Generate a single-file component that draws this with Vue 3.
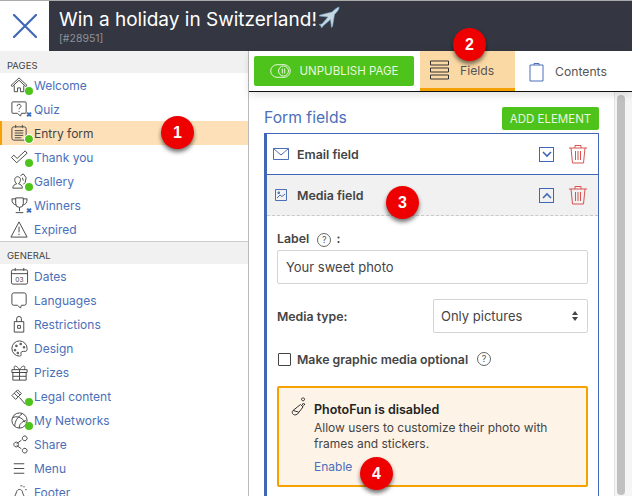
<script setup>
const pages = [
  { name: "Welcome", icon: "home", status: "on" },
  { name: "Quiz", icon: "quiz", status: "off" },
  { name: "Entry form", icon: "form", status: "on", active: true },
  { name: "Thank you", icon: "check", status: "on" },
  { name: "Gallery", icon: "gallery", status: "on" },
  { name: "Winners", icon: "trophy", status: "off" },
  { name: "Expired", icon: "warn" },
];

const general = [
  { name: "Dates", icon: "date", label: "03" },
  { name: "Languages", icon: "bubble" },
  { name: "Restrictions", icon: "lock" },
  { name: "Design", icon: "palette" },
  { name: "Prizes", icon: "gift" },
  { name: "Legal content", icon: "gavel", status: "on" },
  { name: "My Networks", icon: "globe", status: "on" },
  { name: "Share", icon: "share" },
  { name: "Menu", icon: "menu" },
  { name: "Footer", icon: "foot" },
];

const icons = {
  home: "M1 10 9.500 2 18 10l-1.500 1L9.500 4.500 2.500 11ZM4.500 10v6.500h3.500v-4h3v4h3.500V10",
  quiz: "M3 2h13a1 1 0 0 1 1 1v10a1 1 0 0 1-1 1h-4l-1 3-3-3H3a1 1 0 0 1-1-1V3a1 1 0 0 1 1-1ZM7.500 6.500a2 2 0 1 1 3 1.700c-.7.400-1 .8-1 1.600M9.500 11.500v1",
  form: "M4 3h11a2 2 0 0 1 2 2v10a2 2 0 0 1-2 2H4a2 2 0 0 1-2-2V5a2 2 0 0 1 2-2ZM6 1v3M13 1v3M5 7h9M5 9.500h9M5 12h9M5 14.500h7",
  check: "M1.500 10 4 7.500l3.500 3.500L16 3l2 2.500L7 15.500Z",
  gallery: "M3 17c0-3 2-4 4-4.500C5.500 11 5 9.500 5 8c0-2 1.500-3 3-3s3 1 3 3c0 1.500-.5 3-2 4.500 2 .5 4 1.500 4 4.500ZM11 4l3-2 3 4-1 5-2 2M13 6l1 3",
  trophy: "M6 2h8v6a4 4 0 0 1-8 0ZM6 3H2c0 4 1.500 6 4.500 6.500M14 3h4c0 4-1.500 6-4.500 6.500M10 12v4M6 17.500h8",
  warn: "M9.500 2 18 18H1ZM9.500 7v6M9.500 14.500v1.500",
  date: "M3 3h14a1.500 1.500 0 0 1 1.500 1.500v12A1.500 1.500 0 0 1 17 18H3a1.500 1.500 0 0 1-1.500-1.500v-12A1.500 1.500 0 0 1 3 3ZM1.500 7h17M5.500 1v3M14.500 1v3",
  bubble: "M4 2h11a2 2 0 0 1 2 2v9a2 2 0 0 1-2 2h-3l-1 3-3-3H4a2 2 0 0 1-2-2V4a2 2 0 0 1 2-2Z",
  lock: "M4.500 7h10v11h-10ZM7 7V4a2.500 2.500 0 0 1 5 0v3M8 11h3v3H8Z",
  palette: "M10 2a8 8 0 1 0 0 16c2 0 2-1.500 1.500-2.500S12 13 14 13h2c1.500 0 2-1 2-3a8 8 0 0 0-8-8ZM6 6.500h1.500v1.500H6ZM10.500 4.500H12V6h-1.500ZM4.500 11H6v1.500H4.500ZM7.500 14h1.500v1.500H7.500ZM14 8h1.500v1.500H14Z",
  gift: "M2 7h16v3H2ZM3 10h14v8H3ZM10 7v11M3 14h14M5 7C3 3 6 1 10 7c4-6 7-4 5 0",
  gavel: "M2 9l6-6 4 4-6 6ZM10 11l6 7M4.500 6.500l4 4M6.500 4.500l4 4",
  globe: "M10 2a8 8 0 1 0 0 16 8 8 0 0 0 0-16ZM3 7c4-2 9-1 13 5M5 16c0-5 3-10 8-13M10 18c-1-3 2-7 7-8",
  share: "M5 8a2.500 2.500 0 1 1 0 4 2.500 2.500 0 0 1 0-4ZM14 1.500a2.500 2.500 0 1 1 0 4 2.500 2.500 0 0 1 0-4ZM14 14.500a2.500 2.500 0 1 1 0 4 2.500 2.500 0 0 1 0-4ZM7 9l5-3.500M7 11l5 3.500",
  menu: "M4 5h11M4 10h11M4 15h11",
  foot: "M3 19c1-4 3-6 4-10 1-3 5-3 6 0 .5 3 2 5 3 7s-1 3-3 3M11 3h2M14 4h1.500M16 7h1.500",
};
</script>

<template>
  <div class="app">
    <header class="topbar">
      <div class="logo">
        <svg width="24" height="24" viewBox="0 0 24 24"><path d="M1 1l22 22M23 1 1 23" /></svg>
      </div>
      <div class="title-area">
        <h1>Win a holiday in Switzerland!<svg class="plane" width="24" height="24" viewBox="0 0 24 24"><path class="plane-body" d="M22 1c-2 .5-5 3-7 5L3 9l-1 1 9 1-6 7-3 .5L4 20l.5 2 2-2.500 7-6 1 8 1-1 2-12c2-2 4.500-5 4.500-6.500Z" /></svg></h1>
        <small>[#28951]</small>
      </div>
    </header>

    <div class="body">
      <aside class="sidebar">
        <div class="section-label">PAGES</div>
        <ul class="menu">
          <li v-for="p in pages" :key="p.name" :class="{ active: p.active }">
            <span class="icon-wrap">
              <svg width="19" height="19" viewBox="0 0 20 20"><path :d="icons[p.icon]" /></svg>
              <i v-if="p.status === 'on'" class="dot"></i>
              <b v-if="p.status === 'off'" class="cross">✖</b>
            </span>
            {{ p.name }}
          </li>
        </ul>
        <div class="section-label general">GENERAL</div>
        <ul class="menu">
          <li v-for="g in general" :key="g.name">
            <span class="icon-wrap">
              <svg width="19" height="19" viewBox="0 0 20 20">
                <path :d="icons[g.icon]" />
                <text v-if="g.label" x="10" y="15.500" text-anchor="middle">{{ g.label }}</text>
              </svg>
              <i v-if="g.status === 'on'" class="dot"></i>
            </span>
            {{ g.name }}
          </li>
        </ul>
        <span class="step step-1">1</span>
      </aside>

      <main class="main">
        <div class="tabs">
          <button class="publish">
            <svg width="21" height="14" viewBox="0 0 21 14"><rect x=".7" y=".7" width="19.600" height="12.600" rx="6.300" /><circle cx="13.500" cy="7" r="5" /><path d="M12.300 4.500v5M14.700 4.500v5" /></svg>
            UNPUBLISH PAGE
          </button>
          <div class="tab current">
            <svg width="21" height="20" viewBox="0 0 21 20"><path d="M1.500 1h18v4h-18ZM1.500 8h18v4h-18ZM1.500 15h18v4h-18Z" /></svg>
            Fields
          </div>
          <div class="tab">
            <svg class="clip" width="15" height="20" viewBox="0 0 15 20"><path d="M1 3h13v16H1ZM5 3V1.500h5V3" /></svg>
            Contents
          </div>
          <span class="step step-2">2</span>
        </div>

        <div class="content">
          <div class="panel">
            <div class="panel-head">
              <h2>Form fields</h2>
              <button class="add">ADD ELEMENT</button>
            </div>
            <div class="fields">
              <div class="field-row">
                <svg class="type" width="16" height="12" viewBox="0 0 16 12"><path d="M.5.500h15v11H.5ZM.5.500 8 7l7.500-6.500" /></svg>
                <strong>Email field</strong>
                <span class="toggle"><svg width="10" height="7" viewBox="0 0 10 7"><path d="M1 1l4 4 4-4" /></svg></span>
                <svg class="trash" width="20" height="20" viewBox="0 0 20 20"><path d="M1 4h18M7 4V1.500h6V4M3 4l1.500 15h11L17 4M7.500 7v9M10 7v9M12.500 7v9" /></svg>
              </div>
              <div class="field-row open">
                <svg class="type" width="12" height="12" viewBox="0 0 12 12"><path d="M.5.500h11v11H.5ZM2 9l3-3 2 1.500L10 5M3 3h1.500v1.500H3Z" /></svg>
                <strong>Media field</strong>
                <span class="toggle"><svg width="10" height="7" viewBox="0 0 10 7"><path d="M1 6l4-4 4 4" /></svg></span>
                <svg class="trash" width="20" height="20" viewBox="0 0 20 20"><path d="M1 4h18M7 4V1.500h6V4M3 4l1.500 15h11L17 4M7.500 7v9M10 7v9M12.500 7v9" /></svg>
              </div>
              <div class="field-body">
                <label class="lbl">Label <span class="help">?</span> :</label>
                <div class="input">Your sweet photo</div>
                <div class="media-type">
                  <label class="lbl">Media type:</label>
                  <div class="input select">
                    Only pictures
                    <svg width="6" height="10" viewBox="0 0 6 10"><path d="M3 0l3 4H0ZM3 10l3-4H0Z" /></svg>
                  </div>
                </div>
                <div class="check-row">
                  <span class="checkbox"></span>
                  <label class="lbl">Make graphic media optional</label>
                  <span class="help">?</span>
                </div>
                <div class="notice">
                  <svg class="wand" width="15" height="20" viewBox="0 0 15 20"><path d="M2 13.500 9.500 7.500l2.500 2.500L6.500 17C3.500 19.500-.5 16.500 2 13.500ZM2 13.500l5.500 1.500M12 .8a1.500 1.500 0 1 0 .1 0ZM12.500 6.500a1 1 0 1 0 .1 0Z" /></svg>
                  <div>
                    <strong>PhotoFun is disabled</strong>
                    <p>Allow users to customize their photo with frames and stickers.</p>
                    <a>Enable</a>
                  </div>
                </div>
              </div>
              <span class="step step-3">3</span>
              <span class="step step-4">4</span>
            </div>
          </div>
          <div class="scrollbar"><div class="thumb"></div></div>
        </div>
      </main>
    </div>
  </div>
</template>

<style scoped>
.app {
  width: 632px;
  height: 496px;
  overflow: hidden;
  font-family: Inter, "Noto Sans", sans-serif;
  font-size: 12px;
  color: #444;
  background: #fff;
  display: flex;
  flex-direction: column;
}

.topbar {
  height: 51px;
  flex: none;
  display: flex;
  border-top: 1px solid #aaa;
  box-sizing: border-box;
}
.logo {
  width: 49px;
  display: flex;
  align-items: center;
  justify-content: center;
}
.logo path {
  fill: none;
  stroke: #3f67b5;
  stroke-width: 2.200;
  stroke-linecap: round;
}
.title-area {
  flex: 1;
  background: #343741;
  padding: 6px 10px;
  color: #fff;
}
h1 {
  margin: 0;
  font-size: 19px;
  font-weight: 400;
  line-height: 26px;
  display: flex;
  align-items: center;
}
.plane {
  margin-top: -4px;
}
.plane-body {
  fill: #c9d6df;
  stroke: #6fa9d2;
  stroke-width: 0.600;
}
small {
  display: block;
  font-size: 10.500px;
  line-height: 11px;
  color: #8f929a;
}

.body {
  flex: 1;
  display: flex;
  min-height: 0;
}

.sidebar {
  position: relative;
  width: 249px;
  flex: none;
  box-sizing: border-box;
  border-right: 1px solid #bbb;
}
.section-label {
  height: 22px;
  background: #f1f1f1;
  padding: 8px 7px 0;
  box-sizing: border-box;
  font-size: 9.500px;
  line-height: 14px;
  color: #444;
}
.general {
  height: 23px;
  padding-top: 7px;
  border-top: 1px solid #ccc;
}
.menu {
  list-style: none;
  margin: 0;
  padding: 0;
}
.menu li {
  height: 24px;
  display: flex;
  align-items: center;
  padding-left: 10px;
  color: #4b6fb8;
  box-sizing: border-box;
}
.menu li.active {
  background: #fde0b8;
  border-left: 2px solid #f5a100;
  padding-left: 8px;
  color: #444;
}
.icon-wrap {
  position: relative;
  width: 24px;
  height: 20px;
  display: inline-flex;
  align-items: center;
}
.icon-wrap path {
  fill: none;
  stroke: #444;
  stroke-width: 1;
}
.icon-wrap text {
  font-size: 7px;
  fill: #444;
}
.dot {
  position: absolute;
  left: 15px;
  top: 12px;
  width: 8px;
  height: 8px;
  border-radius: 50%;
  background: #4ec31c;
}
.active .dot {
  outline: 1px solid #fff;
}
.cross {
  position: absolute;
  left: 16px;
  top: 11px;
  font-size: 7px;
  line-height: 9px;
  color: #3f67b5;
}

.step {
  position: absolute;
  z-index: 5;
  width: 33px;
  height: 33px;
  border-radius: 50%;
  background: #ee0000;
  color: #fff;
  font-family: "Liberation Sans", sans-serif;
  font-weight: 700;
  font-size: 16px;
  line-height: 33px;
  text-align: center;
  box-shadow: 0 3px 4px rgba(0, 0, 0, 0.55);
}
.step-1 {
  left: 161px;
  top: 65px;
}
.step-2 {
  left: 204px;
  top: -23px;
}
.step-3 {
  left: 119px;
  top: 52px;
}
.step-4 {
  left: 93px;
  top: 323px;
}

.main {
  flex: 1;
  min-width: 0;
  display: flex;
  flex-direction: column;
}
.tabs {
  position: relative;
  height: 41px;
  flex: none;
  box-sizing: border-box;
  border-bottom: 1px solid #111;
  padding-left: 5px;
  display: flex;
  box-shadow: 0 3px 8px rgba(0, 0, 0, 0.12);
  z-index: 2;
  background: #fff;
}
.publish {
  width: 160px;
  height: 30px;
  margin-top: 5px;
  border: none;
  border-radius: 2px;
  background: #4ec31c;
  color: #e8f7df;
  font: inherit;
  font-size: 11.500px;
  display: flex;
  align-items: center;
  justify-content: center;
  gap: 9px;
  padding: 0;
}
.publish svg * {
  fill: none;
  stroke: #e8f7df;
  stroke-width: 1;
}
.tab {
  height: 40px;
  box-sizing: border-box;
  display: flex;
  align-items: center;
  padding-top: 1px;
  gap: 11px;
  font-size: 12.200px;
  color: #555;
  width: 110px;
  padding-left: 14px;
}
.tab path {
  fill: none;
  stroke: #333;
  stroke-width: 1;
}
.tab .clip path {
  stroke: #4b6fb8;
}
.tab.current {
  width: 95px;
  margin-left: 6px;
  padding-left: 9px;
  gap: 10px;
  background: #fbd9a5;
  border-bottom: 3px solid #f5a100;
}

.content {
  flex: 1;
  min-height: 0;
  display: flex;
}
.panel {
  width: 335px;
  margin-left: 15px;
}
.panel-head {
  height: 41px;
  display: flex;
  align-items: flex-start;
  justify-content: space-between;
  padding-top: 15px;
  box-sizing: border-box;
}
h2 {
  margin: 0;
  font-size: 15.700px;
  font-weight: 400;
  line-height: 21px;
  color: #4b6fb8;
}
.add {
  width: 97px;
  height: 23px;
  border: none;
  border-radius: 2px;
  background: #4ec31c;
  color: #e8f7df;
  font: inherit;
  font-size: 11.500px;
  padding: 0;
}
.fields {
  position: relative;
  box-sizing: border-box;
  height: 400px;
  border: 1px solid #3f67b5;
  border-left-width: 3px;
  border-bottom: none;
}
.field-row {
  height: 41px;
  display: flex;
  align-items: center;
  padding-left: 6px;
  box-sizing: border-box;
  border-bottom: 1px solid #3f67b5;
}
.field-row.open {
  background: #f1f1f1;
  border-bottom: 1px dashed #c9c9c9;
}
.open .type {
  margin-left: 2px;
  margin-right: 10px;
}
.type {
  margin-right: 8px;
}
.type path {
  fill: none;
  stroke: #4b6fb8;
  stroke-width: 1;
}
.field-row strong {
  flex: 1;
  font-size: 12.400px;
  font-weight: 600;
  color: #444;
}
.toggle {
  width: 15px;
  height: 15px;
  box-sizing: border-box;
  border: 1px solid #3f67b5;
  display: flex;
  align-items: center;
  justify-content: center;
  margin-right: 14px;
}
.toggle path {
  fill: none;
  stroke: #3f67b5;
  stroke-width: 1.600;
}
.trash {
  margin-right: 10px;
}
.trash path {
  fill: none;
  stroke: #d9534f;
  stroke-width: 1;
}
.field-body {
  padding: 15px 10px 0;
}
.lbl {
  font-size: 12.300px;
  font-weight: 600;
  color: #444;
}
.help {
  display: inline-block;
  width: 12px;
  height: 12px;
  margin: 0 2px 0 5px;
  border: 1px solid #666;
  border-radius: 50%;
  font-size: 9px;
  font-weight: 400;
  line-height: 12px;
  text-align: center;
  color: #555;
  vertical-align: 0;
}
.input {
  height: 34px;
  margin-top: 3px;
  box-sizing: border-box;
  border: 1px solid #d4d4d4;
  border-radius: 2px;
  padding-left: 8px;
  display: flex;
  align-items: center;
  font-size: 13px;
  color: #444;
}
.media-type {
  margin-top: 15px;
  display: flex;
  align-items: center;
  justify-content: space-between;
}
.select {
  width: 155px;
  margin-top: 0;
  padding: 0 9px 0 7px;
  justify-content: space-between;
}
.select path {
  fill: #444;
}
.check-row {
  margin-top: 19px;
  height: 14px;
  display: flex;
  align-items: center;
  gap: 6px;
}
.check-row .help {
  margin-left: 3px;
}
.checkbox {
  width: 13px;
  height: 13px;
  margin-left: 1px;
  box-sizing: border-box;
  border: 1px solid #444;
  border-radius: 1px;
}
.notice {
  margin-top: 20px;
  height: 101px;
  box-sizing: border-box;
  border: 2px solid #f5a100;
  border-radius: 2px;
  background: #fdf3e7;
  padding: 11px 12px;
  display: flex;
  gap: 8px;
  color: #333;
}
.wand {
  margin-top: -2px;
  flex: none;
}
.wand path {
  fill: none;
  stroke: #333;
  stroke-width: 1;
}
.notice strong {
  display: block;
  font-size: 12.500px;
  font-weight: 600;
  line-height: 21px;
  color: #222;
}
.notice p {
  margin: 0;
  font-size: 12px;
  line-height: 16px;
  color: #444;
}
.notice a {
  display: block;
  margin-top: 7px;
  color: #4b6fb8;
  font-size: 12px;
}
.scrollbar {
  width: 18px;
  margin-left: 15px;
  padding: 3px 0 0 2px;
  box-sizing: border-box;
  background: #f5f5f5;
  border-left: 1px solid #e4e4e4;
}
.thumb {
  width: 8px;
  height: 400px;
  border-radius: 4px;
  background: #c0c0c0;
}
</style>
